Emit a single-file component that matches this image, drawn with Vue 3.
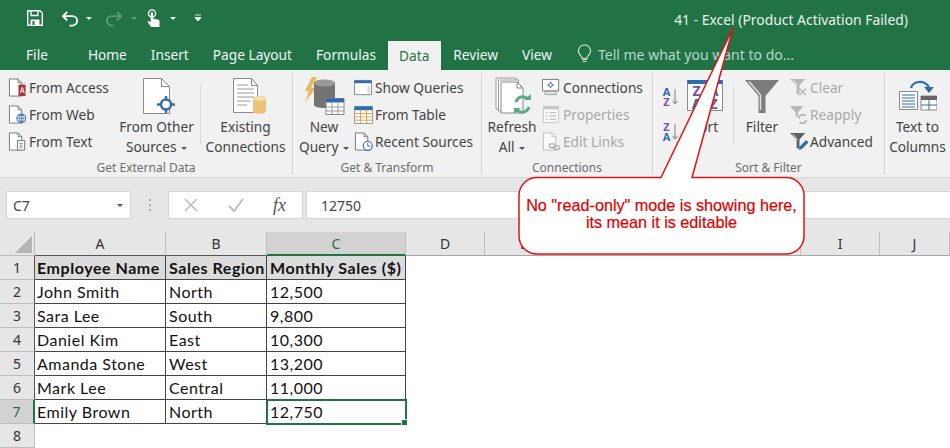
<script setup>
const tabs = ['Home', 'Insert', 'Page Layout', 'Formulas']
const columns = ['A', 'B', 'C', 'D', 'E', 'F', 'G', 'H', 'I', 'J']
const rows = [
  ['Employee Name', 'Sales Region', 'Monthly Sales ($)'],
  ['John Smith', 'North', '12,500'],
  ['Sara Lee', 'South', '9,800'],
  ['Daniel Kim', 'East', '10,300'],
  ['Amanda Stone', 'West', '13,200'],
  ['Mark Lee', 'Central', '11,000'],
  ['Emily Brown', 'North', '12,750']
]
</script>

<template>
  <div class="app">
    <header class="titlebar">
      <div class="qat">
        <svg class="q-save" viewBox="0 0 16 16"><path d="M.7.7h12.2l2.4 2.4v12.2H.7z" fill="none" stroke="#fff" stroke-width="1.4"/><path d="M4 1v4.5h7V1" fill="none" stroke="#fff" stroke-width="1.3"/><path d="M3.5 15V9.5h9V15" fill="#fff"/><path d="M5.5 11h2v4h-2z" fill="#217346"/></svg>
        <svg class="q-undo" viewBox="0 0 20 18"><path d="M6.5 2 2 6.5 6.5 11" fill="none" stroke="#fff" stroke-width="2"/><path d="M2.5 6.5H12a5 5 0 0 1 0 10H9" fill="none" stroke="#fff" stroke-width="2"/></svg>
        <span class="caret"></span>
        <svg class="q-redo" viewBox="0 0 20 18"><path d="M13.5 2 18 6.500 13.500 11" fill="none" stroke="#5f9c7b" stroke-width="2"/><path d="M17.500 6.500H8a5 5 0 0 0 0 10h2" fill="none" stroke="#5f9c7b" stroke-width="2"/></svg>
        <span class="caret dim"></span>
        <svg class="q-touch" viewBox="0 0 15 19"><circle cx="6" cy="4.500" r="3.600" fill="none" stroke="#fff" stroke-width="1.300"/><path d="M4.700 4.500a1.200 1.200 0 0 1 2.400 0v5l5.200 1.300a1.500 1.500 0 0 1 1.200 1.500V18H5.200L1.500 13l1-1 2.200 1.300z" fill="#fff"/></svg>
        <span class="caret"></span>
        <svg class="q-more" viewBox="0 0 8 8"><path d="M1 1h6M1 3.500h6L4 7z" fill="#fff" stroke="#fff" stroke-width=".8"/></svg>
      </div>
      <div class="doc-title">41 - Excel (Product Activation Failed)</div>
    </header>

    <nav class="tabs">
      <span class="tab file">File</span>
      <span v-for="tab in tabs" :key="tab" class="tab">{{ tab }}</span>
      <span class="tab active">Data</span>
      <span class="tab">Review</span>
      <span class="tab">View</span>
      <svg class="bulb" viewBox="0 0 15 20"><path d="M7.500 1a6 6 0 0 0-3.600 10.800c.7.600 1 1.500 1 2.400h5.200c0-.9.300-1.800 1-2.400A6 6 0 0 0 7.500 1z" fill="none" stroke="#d5e7dc" stroke-width="1.100"/><path d="M5 15.500h5M5.500 17.500h4" stroke="#d5e7dc" stroke-width="1.100"/></svg>
      <span class="tell">Tell me what you want to do...</span>
    </nav>

    <section class="ribbon">
      <div class="group g1">
        <div class="group-body">
          <div class="small-col col-ext">
            <div class="small">
              <svg class="ic" viewBox="0 0 20 20"><path d="M1.500 1h9l4 4v14h-13z" fill="#fff" stroke="#777"/><path d="M10.500 1v4h4" fill="none" stroke="#777"/><path d="M11 7h7.500v12H11z" fill="#a4373a"/><path d="M13 16l1.700-6h.6l1.700 6M13.700 14h2.600" fill="none" stroke="#fff" stroke-width="1"/></svg>
              <span>From Access</span>
            </div>
            <div class="small">
              <svg class="ic" viewBox="0 0 20 20"><path d="M1.500 1h9l4 4v14h-13z" fill="#fff" stroke="#777"/><path d="M10.500 1v4h4" fill="none" stroke="#777"/><circle cx="14" cy="14" r="4.600" fill="#fff" stroke="#3d75b0" stroke-width="1.100"/><path d="M9.500 14h9M14 9.500v9M11 11h6M11 17h6" stroke="#3d75b0" stroke-width=".8"/><ellipse cx="14" cy="14" rx="2" ry="4.500" fill="none" stroke="#3d75b0" stroke-width=".8"/></svg>
              <span>From Web</span>
            </div>
            <div class="small">
              <svg class="ic" viewBox="0 0 20 20"><path d="M1.500 1h9l4 4v14h-13z" fill="#fff" stroke="#777"/><path d="M10.500 1v4h4" fill="none" stroke="#777"/><path d="M10 9h7.500v10H10z" fill="#fff" stroke="#777"/><path d="M12 12h3.500M12 14h3.500M12 16h3.500" stroke="#888"/></svg>
              <span>From Text</span>
            </div>
          </div>
          <div class="large w-other">
            <div class="large-icon">
              <svg class="ic-other" viewBox="0 0 34 38"><path d="M1.500 1.500h18l8 8v27h-26z" fill="#fff" stroke="#8a8a8a"/><path d="M19.500 1.500v8h8" fill="none" stroke="#8a8a8a"/><circle cx="24" cy="27.500" r="5" fill="#fff" stroke="#2e6cab" stroke-width="2.400"/><path d="M24 19v3.500M24 32.500V36M15 27.500h4M29 27.500h4" stroke="#2e6cab" stroke-width="2.400"/></svg>
            </div>
            <span>From Other</span>
            <span>Sources <i class="drop"></i></span>
          </div>
          <div class="thin"></div>
          <div class="large w-existing">
            <div class="large-icon">
              <svg class="ic-existing" viewBox="0 0 36 38"><path d="M1.500 1.500h18l6 7v27h-24z" fill="#fff" stroke="#8a8a8a"/><path d="M19.500 1.500v7h6" fill="none" stroke="#8a8a8a"/><path d="M5 8h11M5 12h17M5 16h17M5 20h17M5 24h13M5 28h10" stroke="#9a9a9a"/><path d="M21 21.500c0-3 13-3 13 0v13c0 3-13 3-13 0z" fill="#ecc478"/><ellipse cx="27.500" cy="21.500" rx="6.500" ry="2.200" fill="#f6e0b0"/></svg>
            </div>
            <span>Existing</span>
            <span>Connections</span>
          </div>
        </div>
        <div class="group-label">Get External Data</div>
      </div>

      <div class="group g2">
        <div class="group-body">
          <div class="large w-new">
            <div class="large-icon">
              <svg class="ic-new" viewBox="0 0 42 40"><path d="M9 1h5l-6 11h5L2 26l4-11H2z" fill="#eeb656"/><path d="M11 7c0-4 21-4 21 0v22c0 4-21 4-21 0z" fill="#737373"/><ellipse cx="21.500" cy="7" rx="10.500" ry="3.500" fill="#9a9a9a"/><path d="M23 22.500h18v16H23z" fill="#fff" stroke="#888"/><path d="M23 22.500h18v4H23z" fill="#2e6cab"/><path d="M23 31h18M23 35h18M29 26v12M35 26v12" stroke="#999"/></svg>
            </div>
            <span>New</span>
            <span>Query <i class="drop"></i></span>
          </div>
          <div class="small-col col-query">
            <div class="small">
              <svg class="ic" viewBox="0 0 20 20"><path d="M.500 2.500h18v15H.500z" fill="#fff" stroke="#888"/><path d="M.500 2.500h18v3H.500z" fill="#2e6cab"/><path d="M14 8h3v8h-3z" fill="#ddd"/></svg>
              <span>Show Queries</span>
            </div>
            <div class="small">
              <svg class="ic" viewBox="0 0 20 20"><path d="M.500 1.500h19v18H.500z" fill="#fff" stroke="#999"/><path d="M.500 1.500h19v4H.500z" fill="#2e6cab"/><path d="M.500 9h19M.500 12.500h19M.500 16h19M6.800 5v14M13.200 5v14" stroke="#e0a050"/></svg>
              <span>From Table</span>
            </div>
            <div class="small">
              <svg class="ic" viewBox="0 0 20 20"><path d="M1.500 1h9l4 4v14h-13z" fill="#fff" stroke="#777"/><path d="M10.500 1v4h4" fill="none" stroke="#777"/><circle cx="14.500" cy="14.500" r="4.800" fill="#fff" stroke="#2e6cab" stroke-width="1.200"/><path d="M14.500 11.500v3.300h2.500" fill="none" stroke="#2e6cab"/></svg>
              <span>Recent Sources</span>
            </div>
          </div>
        </div>
        <div class="group-label">Get &amp; Transform</div>
      </div>

      <div class="group g3">
        <div class="group-body">
          <div class="large w-refresh">
            <div class="large-icon">
              <svg class="ic-refresh" viewBox="0 0 38 38"><path d="M1 1h20v31H1z" fill="#fff" stroke="#999"/><path d="M3.500 3h20v31h-20z" fill="#fff" stroke="#999"/><path d="M6 5h16l6 6v25H6z" fill="#fff" stroke="#8a8a8a"/><path d="M22 5v6h6" fill="none" stroke="#8a8a8a"/><path d="M21 25a7 7 0 0 1 12-3M34 30a7 7 0 0 1-12 3" fill="none" stroke="#5ba88a" stroke-width="3"/><path d="M29 23h7v-6zM26 31h-7v6z" fill="#5ba88a"/></svg>
            </div>
            <span>Refresh</span>
            <span>All <i class="drop"></i></span>
          </div>
          <div class="small-col col-conn">
            <div class="small">
              <svg class="ic" viewBox="0 0 20 20"><path d="M.500 1.500h17v12H.500z" fill="#fff" stroke="#777"/><path d="M3 14h12v3.500H3z" fill="#ddd" stroke="#888" stroke-width=".7"/><path d="M9 4l.800 2.200L12 7.500l-2.200.8L9 10.500l-.8-2.200L6 7.500l2.200-1.300z" fill="#fff" stroke="#2e6cab"/></svg>
              <span>Connections</span>
            </div>
            <div class="small disabled">
              <svg class="ic" viewBox="0 0 20 20"><path d="M1.500 1.500h16v17h-16z" fill="#f8f8f8" stroke="#c6c6c6"/><path d="M1.500 1.500h16v3h-16z" fill="#c6c6c6"/><path d="M4 8h2M4 11.500h2M4 15h2M8 8h7M8 11.500h7M8 15h7" stroke="#b4b4b4"/></svg>
              <span>Properties</span>
            </div>
            <div class="small disabled">
              <svg class="ic" viewBox="0 0 20 20"><path d="M1.500 1h9l4 4v14h-13z" fill="#fafafa" stroke="#c0c0c0"/><path d="M10.500 1v4h4" fill="none" stroke="#c0c0c0"/><rect x="7.500" y="12.500" width="6.500" height="4" rx="2" fill="none" stroke="#aaa" stroke-width="1.200"/><rect x="12" y="14.500" width="6.500" height="4" rx="2" fill="none" stroke="#aaa" stroke-width="1.200"/></svg>
              <span>Edit Links</span>
            </div>
          </div>
        </div>
        <div class="group-label">Connections</div>
      </div>

      <div class="group g4">
        <div class="group-body">
          <div class="az-col">
            <div class="az"><span class="az-letters"><b class="az-a">A</b><b class="az-z">Z</b></span><svg class="az-arrow" viewBox="0 0 7 20"><path d="M3.500 1v17M.500 14.500l3 3.500 3-3.500" fill="none" stroke="#777" stroke-width="1.100"/></svg></div>
            <div class="az"><span class="az-letters"><b class="az-z">Z</b><b class="az-a">A</b></span><svg class="az-arrow" viewBox="0 0 7 20"><path d="M3.500 1v17M.500 14.500l3 3.500 3-3.500" fill="none" stroke="#777" stroke-width="1.100"/></svg></div>
          </div>
          <div class="large w-sort">
            <div class="large-icon">
              <div class="sort-icon">
                <b class="az-z">Z</b><b class="az-a">A</b><b class="az-a">A</b><b class="az-z">Z</b>
              </div>
            </div>
            <span>Sort</span>
          </div>
          <div class="thin short"></div>
          <div class="large w-filter">
            <div class="large-icon">
              <svg class="ic-filter" viewBox="0 0 34 34"><path d="M0 1h34L20.500 17v17h-7V17z" fill="#7c7c7c"/><path d="M4 2.500 15.500 16v15" fill="none" stroke="#dcdcdc" stroke-width="1.600"/></svg>
            </div>
            <span>Filter</span>
          </div>
          <div class="small-col col-filter">
            <div class="small disabled">
              <svg class="ic" viewBox="0 0 20 20"><path d="M1 1h16l-6 7v9H8V8z" fill="#b8b8b8"/><path d="M4 2l5 6" stroke="#eee"/><path d="M11 11l7 7M18 11l-7 7" stroke="#b0b0b0" stroke-width="1.300"/></svg>
              <span>Clear</span>
            </div>
            <div class="small disabled">
              <svg class="ic" viewBox="0 0 20 20"><path d="M1 1h14L9.500 8v4H7V8z" fill="#b8b8b8"/><path d="M10 14a4.500 4.500 0 0 1 7.500-2.500M18.500 16a4.500 4.500 0 0 1-7.500 2" fill="none" stroke="#b0b0b0" stroke-width="1.800"/></svg>
              <span>Reapply</span>
            </div>
            <div class="small">
              <svg class="ic" viewBox="0 0 20 20"><path d="M1 1h16l-6 7v9H8V8z" fill="#606060"/><path d="M4 2l5 6" stroke="#ddd"/><path d="M10 19l1-3.500 7-7 2.500 2.500-7 7z" fill="#2e6cab"/></svg>
              <span>Advanced</span>
            </div>
          </div>
        </div>
        <div class="group-label">Sort &amp; Filter</div>
      </div>

      <div class="group g5">
        <div class="group-body">
          <div class="large w-text">
            <div class="large-icon">
              <svg class="ic-text" viewBox="0 0 38 32"><path d="M.500 11.500h18v18H.500z" fill="#fff" stroke="#888"/><path d="M3 15h13M3 18h13M3 21h13M3 24h13M3 27h13" stroke="#2e6cab"/><path d="M22 16h16v14H22z" fill="#fff" stroke="#888"/><path d="M22 16h16v4H22z" fill="#666"/><path d="M30 20v10M22 25h16" stroke="#2e6cab"/><path d="M12 8C14 1 26-1 30 8" fill="none" stroke="#2e6cab" stroke-width="2.200"/><path d="M25 7h10l-5 6z" fill="#2e6cab"/></svg>
            </div>
            <span>Text to</span>
            <span>Columns</span>
          </div>
        </div>
      </div>
    </section>

    <section class="formula-bar">
      <div class="name-box">C7<i class="drop name-drop"></i></div>
      <div class="grip"><i></i><i></i><i></i></div>
      <div class="fx-box">
        <svg class="fx-cross" viewBox="0 0 14 14"><path d="M1 1l12 12M13 1 1 13" stroke="#bdbdbd" stroke-width="1.500"/></svg>
        <svg class="fx-check" viewBox="0 0 16 14"><path d="M1 8l5 5L15 1" fill="none" stroke="#bdbdbd" stroke-width="2"/></svg>
        <span class="fx">fx</span>
      </div>
      <div class="formula-input">12750</div>
    </section>

    <section class="sheet">
      <div class="corner"><i></i></div>
      <div v-for="col in columns" :key="col" class="col-head" :class="{ 'col-sel': col === 'C', 'col-used': col < 'C' }">{{ col }}</div>
      <template v-for="(row, r) in rows" :key="r">
        <div class="row-head" :class="{ 'row-sel': r === 6 }">{{ r + 1 }}</div>
        <div
          v-for="(cell, c) in row"
          :key="c"
          class="cell"
          :class="{ head: r === 0, current: r === 6 && c === 2 }"
        >{{ cell }}<i v-if="r === 6 && c === 2" class="handle"></i></div>
        <div class="blank"></div>
      </template>
      <div class="row-head last">8</div>
    </section>

    <svg class="callout" viewBox="0 0 950 448">
      <path d="M537 177.500H661L733 28 692 177.500H786a18 18 0 0 1 18 18V236a18 18 0 0 1-18 18H537a18 18 0 0 1-18-18V195.500a18 18 0 0 1 18-18z" fill="#fff" stroke="#dc1414" stroke-width="1.500"/>
    </svg>
    <div class="callout-text">No "read-only" mode is showing here,<br>its mean it is editable</div>
  </div>
</template>

<style>
html, body { margin: 0; padding: 0; }
</style>

<style scoped>
.app {
  position: relative;
  width: 950px;
  height: 448px;
  overflow: hidden;
  background: #fff;
  font-family: "Noto Sans", sans-serif;
  font-size: 13.7px;
  color: #444;
}
svg { display: block; flex: none; }
i { display: block; font-style: normal; }

.titlebar {
  height: 40px;
  background: #217346;
  display: flex;
  justify-content: space-between;
  align-items: center;
  color: #fff;
}
.qat { display: flex; align-items: center; padding: 0 0 4px 27px; }
.q-save { width: 16px; height: 16px; margin-right: 18px; }
.q-undo { width: 19px; height: 17px; margin-right: 6px; }
.caret { width: 0; height: 0; border: 3px solid transparent; border-top: 3px solid #fff; margin: 4px 12px 0 0; }
.caret.dim { border-top-color: #5f9c7b; margin-right: 9px; }
.q-redo { width: 19px; height: 17px; margin-right: 8px; }
.q-touch { width: 15px; height: 19px; margin-right: 9px; }
.q-more { width: 8px; height: 8px; margin-left: 6px; }
.doc-title { padding: 0 42px 2px 0; font-size: 13.9px; color: #e9f2ec; }

.tabs {
  height: 30px;
  background: #217346;
  display: flex;
  align-items: stretch;
  color: #eef5f1;
  font-size: 13.7px;
}
.tab { display: flex; align-items: center; padding: 0 12px 2px; }
.tab.file { padding: 0 40px 2px 26px; }
.tab:nth-child(2) { padding-left: 0; }
.tab.active { background: #f1f1f1; color: #217346; padding: 0 12px 1px 11px; margin-top: 1px; }
.bulb { width: 15px; height: 20px; align-self: center; margin: 0 0 2px 13px; }
.tell { align-self: center; margin: 0 0 2px 6px; color: #b9d6c5; font-size: 14px; }

.ribbon {
  height: 108px;
  box-sizing: border-box;
  background: #f1f1f1;
  border-bottom: 1px solid #d6d6d6;
  display: flex;
}
.group { display: flex; flex-direction: column; box-sizing: border-box; border-right: 1px solid #d3d3d3; margin: 3px 0 3px; }
.g1 { width: 293px; }
.g2 { width: 189px; }
.g3 { width: 171px; }
.g4 { width: 232px; }
.g5 { width: 65px; border-right: 0; }
.group-body { flex: 1; min-height: 0; display: flex; align-items: flex-start; padding-top: 1px; }
.group-label { height: 12px; line-height: 12px; text-align: center; font-size: 12px; color: #6e6e6e; }

.small-col { display: flex; flex-direction: column; }
.small { height: 27px; display: flex; align-items: center; white-space: nowrap; gap: 2px; padding-bottom: 1px; box-sizing: border-box; }
.small.disabled { color: #a8a8a8; }
.ic { width: 19px; height: 19px; }
.col-ext { width: 113px; padding-left: 8px; box-sizing: border-box; }
.col-query { padding-left: 2px; }
.col-conn { padding-left: 2px; }
.col-filter { padding-left: 0; }

.large { display: flex; flex-direction: column; align-items: center; line-height: 20px; white-space: nowrap; }
.large-icon { height: 43px; display: flex; align-items: center; justify-content: center; }
.w-other { width: 87px; }
.w-existing { width: 89px; }
.w-new { width: 56px; margin-left: 3px; }
.w-refresh { width: 56px; margin-left: 2px; }
.w-sort { width: 36px; margin-left: 9px; }
.w-filter { width: 54px; margin-left: 1px; }
.w-text { width: 65px; }
.thin { width: 1px; height: 60px; background: #dcdcdc; margin-top: 10px; }
.short { margin-left: 10px; }
.drop { display: inline-block; width: 0; height: 0; border: 3px solid transparent; border-top: 3px solid #555; margin: 0 0 -1px 1px; }

.ic-other { width: 34px; height: 38px; margin-left: 5px; }
.ic-existing { width: 36px; height: 38px; margin-left: 8px; }
.ic-new { width: 42px; height: 40px; }
.ic-refresh { width: 38px; height: 38px; margin-left: 4px; }
.ic-filter { width: 34px; height: 34px; }
.ic-text { width: 38px; height: 32px; }

.az-col { width: 16px; margin-left: 9px; display: flex; flex-direction: column; gap: 15px; padding-top: 13px; }
.az { display: flex; height: 20px; align-items: stretch; gap: 1px; }
.az-letters { display: flex; flex-direction: column; width: 9px; }
.az-letters b { display: block; height: 10px; line-height: 10px; font-size: 11px; text-align: center; }
.az-a { color: #2e6cab; font-weight: 700; }
.az-z { color: #7b4ea3; font-weight: 700; }
.az-arrow { width: 6px; height: 20px; }
.sort-icon {
  width: 36px;
  height: 31px;
  box-sizing: border-box;
  background: #fff;
  border: 1px solid #8a8a8a;
  border-top: 4px solid #2e6cab;
  display: grid;
  grid-template-columns: 1fr 1fr;
  grid-auto-rows: 13px;
  justify-items: center;
  align-items: center;
  font-size: 14px;
  line-height: 13px;
}

.formula-bar {
  height: 54px;
  box-sizing: border-box;
  background: #e6e6e6;
  display: flex;
  padding: 13px 0 13px 6px;
  font-size: 14px;
}
.name-box {
  width: 125px;
  box-sizing: border-box;
  background: #fff;
  border: 1px solid #d4d4d4;
  display: flex;
  align-items: center;
  justify-content: space-between;
  padding: 0 7px 0 6px;
  color: #444;
}
.name-drop { margin: 4px 0 0; }
.grip { width: 37px; display: flex; flex-direction: column; align-items: center; justify-content: center; gap: 3px; }
.grip i { width: 2px; height: 2px; background: #a8a8a8; }
.fx-box {
  width: 135px;
  box-sizing: border-box;
  background: #fff;
  border: 1px solid #d4d4d4;
  display: flex;
  align-items: center;
  padding-left: 15px;
}
.fx-cross { width: 14px; height: 14px; margin-right: 30px; }
.fx-check { width: 16px; height: 14px; margin-right: 29px; }
.fx { font: italic 18px "Liberation Serif", serif; color: #555; }
.formula-input {
  flex: 1;
  margin-left: 3px;
  background: #fff;
  border: 1px solid #d4d4d4;
  border-right: 0;
  display: flex;
  align-items: center;
  padding-left: 14px;
  color: #444;
}

.sheet {
  display: grid;
  grid-template-columns: 35px 131px 101px 139px repeat(6, 79px) 70px;
  grid-auto-rows: 24px;
  font-family: Lato, sans-serif;
  font-size: 16px;
  letter-spacing: .5px;
  color: #111;
}
.corner { background: #e6e6e6; border-right: 1px solid #bbb; border-bottom: 1px solid #bbb; box-sizing: border-box; position: relative; }
.corner i { position: absolute; right: 2px; bottom: 2px; width: 0; height: 0; border-left: 17px solid transparent; border-bottom: 17px solid #b4b4b4; }
.col-head, .row-head {
  display: flex;
  align-items: center;
  justify-content: center;
  box-sizing: border-box;
  background: #e6e6e6;
  color: #333;
  font-family: "Noto Sans", sans-serif;
  font-size: 14px;
  letter-spacing: 0;
  border-right: 1px solid #bdbdbd;
  border-bottom: 1px solid #a6a6a6;
}
.col-used { border-bottom-color: #555; }
.row-head { border-bottom-color: #bdbdbd; border-right-color: #555; }
.row-head.last { border-right-color: #bdbdbd; }
.col-sel { background: #d2d2d2; color: #217346; border-bottom: 2px solid #217346; }
.row-sel { background: #d2d2d2; color: #217346; border-right: 2px solid #217346; }
.cell {
  position: relative;
  display: flex;
  align-items: center;
  padding-left: 3px;
  box-sizing: border-box;
  white-space: nowrap;
  border-right: 1px solid #444;
  border-bottom: 1px solid #444;
}
.row-head + .cell { padding-left: 2px; }
.cell.head { font-weight: 700; background: #dcdcdc; letter-spacing: .55px; }
.cell.current { outline: 2px solid #217346; outline-offset: -1px; }
.handle { position: absolute; right: -3px; bottom: -3px; width: 5px; height: 5px; background: #217346; border: 1px solid #fff; box-sizing: content-box; }
.blank { grid-column: span 7; }

.callout { position: absolute; left: 0; top: 0; width: 950px; height: 448px; pointer-events: none; }
.callout-text {
  position: absolute;
  left: 519px;
  top: 197px;
  width: 285px;
  text-align: center;
  font-family: "Liberation Sans", sans-serif;
  font-size: 16.2px;
  line-height: 17px;
  color: #e00000;
  -webkit-text-stroke: .2px #e00000;
}
</style>
